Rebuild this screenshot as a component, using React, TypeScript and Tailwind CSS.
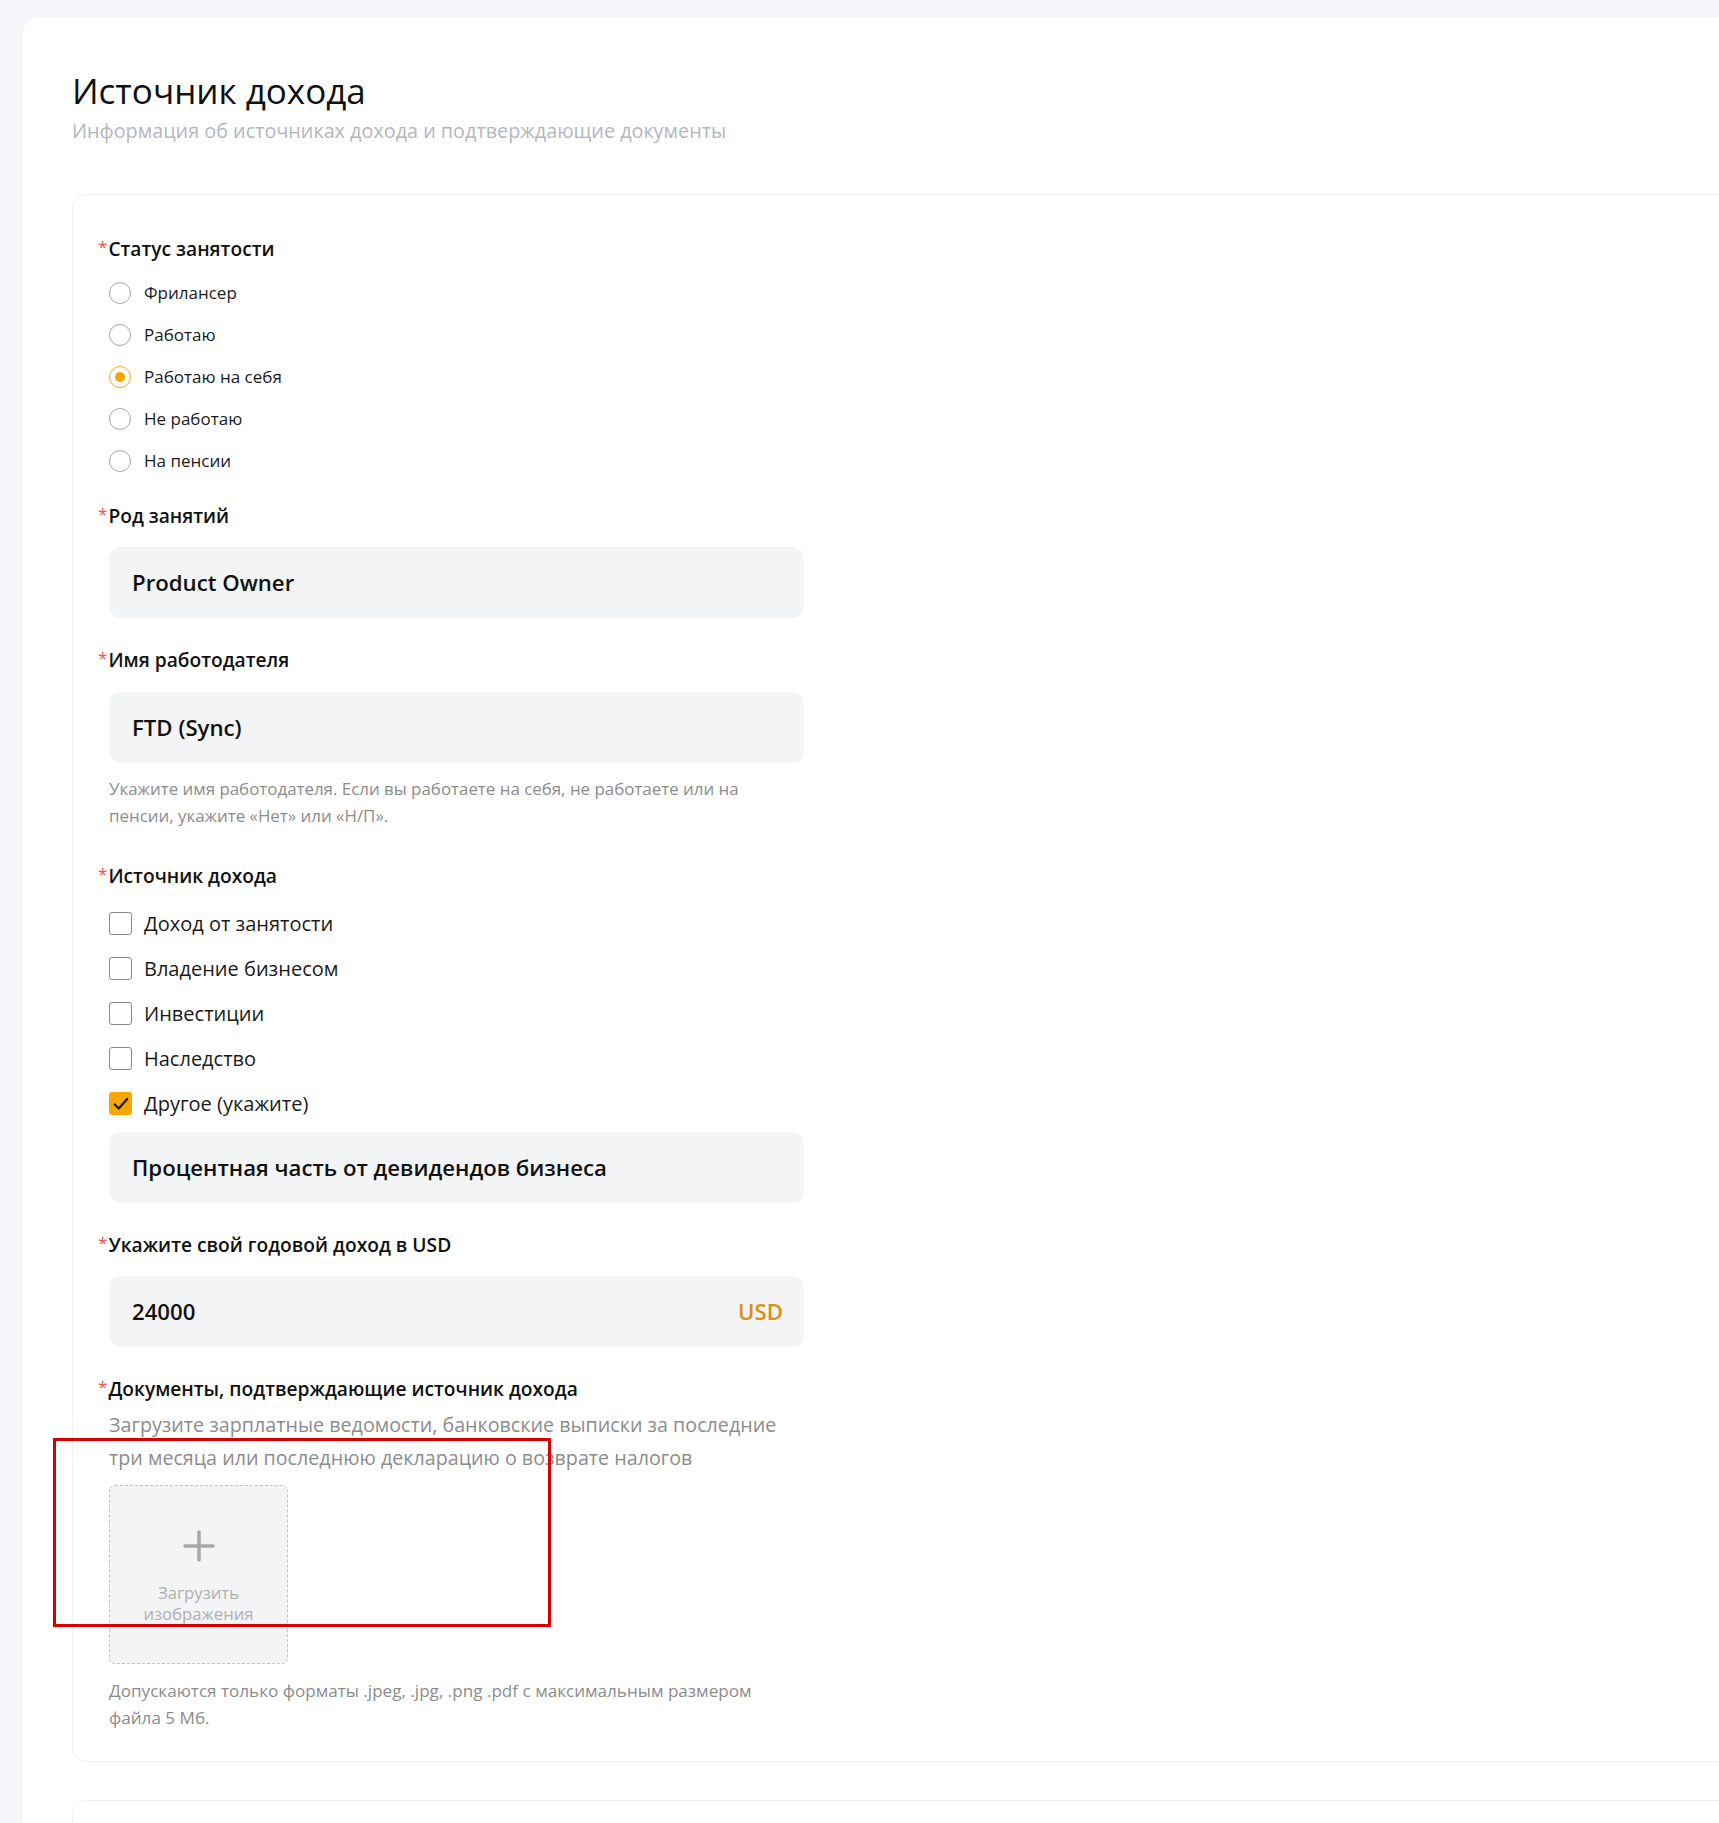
import React from "react";

const F = { fontFamily: '"Open Sans", "Noto Sans", sans-serif' } as const;

function Label({ children, className = "" }: { children: React.ReactNode; className?: string }) {
  return (
    <div className={"flex items-center h-[24px] text-[19.2px] font-semibold text-[#111] " + className}>
      <span className="text-[#ff4d4f] font-normal text-[17px] mr-[1px] self-start leading-[20px]">*</span>
      <span>{children}</span>
    </div>
  );
}

function Radio({ label, checked = false }: { label: string; checked?: boolean }) {
  return (
    <div className="flex items-center h-[42px] pl-[11px]">
      {checked ? (
        <div className="w-[22px] h-[22px] rounded-full border-[1.5px] border-[#f5a623] flex items-center justify-center">
          <div className="w-[10px] h-[10px] rounded-full bg-[#f5a600]" />
        </div>
      ) : (
        <div className="w-[22px] h-[22px] rounded-full border-[1.5px] border-[#a8a8a8]" />
      )}
      <span className="ml-[13px] text-[17px] text-[#1a1a1a]">{label}</span>
    </div>
  );
}

function Checkbox({ label, checked = false }: { label: string; checked?: boolean }) {
  return (
    <div className="flex items-center h-[45px] pl-[11px]">
      {checked ? (
        <div className="w-[23px] h-[23px] rounded-[3px] bg-[#f7a600] flex items-center justify-center">
          <svg width="18" height="18" viewBox="0 0 16 16" fill="none">
            <path d="M2.5 8.5 L6 12 L13.5 3.5" stroke="#1a1a1a" strokeWidth="2" strokeLinecap="round" strokeLinejoin="round" />
          </svg>
        </div>
      ) : (
        <div className="w-[23px] h-[23px] rounded-[3px] border-[1.5px] border-[#8a8a8a] bg-white" />
      )}
      <span className="ml-[12px] text-[20px] text-[#1a1a1a]">{label}</span>
    </div>
  );
}

function Field({ value, suffix }: { value: string; suffix?: string }) {
  return (
    <div className="ml-[11px] w-[695px] h-[71px] rounded-[12px] bg-[#f3f4f6] flex items-center justify-between pl-[23px] pr-[21px]">
      <span className="text-[22.2px] font-semibold text-[#111]">{value}</span>
      {suffix && <span className="text-[22.2px] font-semibold text-[#e08e0b]">{suffix}</span>}
    </div>
  );
}

export default function App() {
  return (
    <div className="relative min-h-screen bg-[#f5f6fa] overflow-hidden pt-[17px]" style={F}>
      <div className="ml-[23px] w-[1800px] bg-white rounded-tl-[16px] pl-[49px] pt-[50px]">
        <h1 className="text-[35px] leading-[48px] font-medium text-[#111]">Источник дохода</h1>
        <p className="text-[19.8px] leading-[28px] text-[#b3b7bd] mt-[2px]">
          Информация об источниках дохода и подтверждающие документы
        </p>

        <div className="mt-[49px] border border-[#efefef] rounded-tl-[14px] rounded-bl-[14px] pl-[25px] pt-[42px] pb-[30px]">
          <Label>Статус занятости</Label>
          <div className="mt-[11px]">
            <Radio label="Фрилансер" />
            <Radio label="Работаю" />
            <Radio label="Работаю на себя" checked />
            <Radio label="Не работаю" />
            <Radio label="На пенсии" />
          </div>

          <Label className="mt-[22px]">Род занятий</Label>
          <div className="mt-[19px]">
            <Field value="Product Owner" />
          </div>

          <Label className="mt-[30px]">Имя работодателя</Label>
          <div className="mt-[20px]">
            <Field value="FTD (Sync)" />
          </div>
          <p className="ml-[11px] mt-[12px] w-[660px] text-[16.9px] leading-[27px] text-[#8c8c8c]">
            Укажите имя работодателя. Если вы работаете на себя, не работаете или на пенсии, укажите «Нет» или «Н/П».
          </p>

          <Label className="mt-[35px]">Источник дохода</Label>
          <div className="mt-[13px]">
            <Checkbox label="Доход от занятости" />
            <Checkbox label="Владение бизнесом" />
            <Checkbox label="Инвестиции" />
            <Checkbox label="Наследство" />
            <Checkbox label="Другое (укажите)" checked />
          </div>
          <div className="mt-[6px]">
            <Field value="Процентная часть от девидендов бизнеса" />
          </div>

          <Label className="mt-[30px]">Укажите свой годовой доход в USD</Label>
          <div className="mt-[19px]">
            <Field value="24000" suffix="USD" />
          </div>

          <Label className="mt-[30px]">Документы, подтверждающие источник дохода</Label>
          <p className="ml-[11px] mt-[7px] w-[690px] text-[19.7px] leading-[33px] text-[#8c8c8c]">
            Загрузите зарплатные ведомости, банковские выписки за последние три месяца или последнюю декларацию о возврате налогов
          </p>
          <div className="ml-[11px] mt-[11px] w-[179px] h-[179px] rounded-[6px] border border-dashed border-[#c4c4c4] bg-[#f3f4f6] flex flex-col items-center pt-[44px]">
            <svg width="32" height="32" viewBox="0 0 32 32">
              <path d="M16 2 V30 M2 16 H30" stroke="#a8a8a8" strokeWidth="3.5" strokeLinecap="round" />
            </svg>
            <span className="mt-[20px] text-[16.7px] leading-[21px] text-[#b0b0b0] text-center">
              Загрузить
              <br />
              изображения
            </span>
          </div>
          <p className="ml-[11px] mt-[13px] w-[665px] text-[17.1px] leading-[27px] text-[#8c8c8c]">
            Допускаются только форматы .jpeg, .jpg, .png .pdf с максимальным размером файла 5 Мб.
          </p>
        </div>

        <div className="mt-[38px] h-[200px] border border-[#efefef] rounded-tl-[14px]" />
      </div>

      <div className="absolute left-[53px] top-[1438px] w-[498px] h-[189px] border-[3px] border-[#d80000] pointer-events-none" />
    </div>
  );
}
